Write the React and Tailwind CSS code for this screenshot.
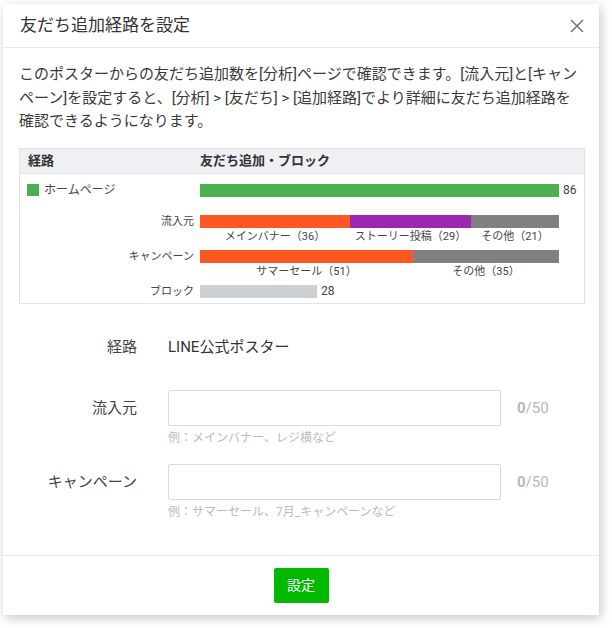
import React from "react";

const font = { fontFamily: 'Roboto, "Noto Sans CJK JP", sans-serif' };
const W = 359;
const w = (n) => Math.round((n / 86) * W);

function Seg({ color, width, label }) {
  return (
    <div className="flex flex-col items-center" style={{ width }}>
      <div className={`h-[13px] w-full ${color}`} />
      <div className="mt-[1px] h-[16px] text-[11px] leading-[16px] text-[#444] whitespace-nowrap">{label}</div>
    </div>
  );
}

export default function App() {
  return (
    <div className="min-h-[628px] bg-white pl-[3px] pt-[4px]" style={font}>
      <div className="w-[596px] bg-white shadow-[2px_3px_10px_rgba(0,0,0,0.22)] text-[#333]">
        {/* header */}
        <div className="flex h-[44px] items-center justify-between border-b border-[#e9eaec] pl-[17px] pr-[14px]">
          <div className="text-[17px] text-[#333]">友だち追加経路を設定</div>
          <svg width="16" height="16" viewBox="0 0 16 16" className="text-[#777]">
            <path d="M2 2 L14 14 M14 2 L2 14" stroke="currentColor" strokeWidth="1.6" />
          </svg>
        </div>

        {/* body */}
        <div className="px-[16px] pt-[15px]">
          <p className="text-[15px] leading-[23.5px] text-[#3a3a3a]">
            このポスターからの友だち追加数を[分析]ページで確認できます。[流入元]と[キャンペーン]を設定すると、[分析] &gt; [友だち] &gt; [追加経路]でより詳細に友だち追加経路を確認できるようになります。
          </p>

          {/* chart */}
          <div className="mt-[14px] w-[566px] border border-[#dfe2e6]">
            <div className="flex h-[25px] items-center border-b border-[#dfe2e6] bg-[#eef0f3] text-[13px] font-bold text-[#333]">
              <div className="w-[180px] pl-[8px]">経路</div>
              <div>友だち追加・ブロック</div>
            </div>
            <div className="pt-[10px] pb-[5px] text-[12px] leading-[13px]">
              <div className="flex h-[13px] items-center">
                <div className="flex w-[180px] items-center pl-[7px]">
                  <div className="h-[12px] w-[12px] bg-[#4caf50]" />
                  <span className="ml-[5px] text-[12px] leading-[13px] text-[#444]">ホームページ</span>
                </div>
                <div className="h-[13px] bg-[#4caf50]" style={{ width: W }} />
                <span className="ml-[4px] text-[12px] leading-[13px] text-[#444]">86</span>
              </div>

              <div className="mt-[18px] flex">
                <div className="w-[180px] pr-[6px] text-right text-[11px] leading-[13px] text-[#444]">流入元</div>
                <div className="flex">
                  <Seg color="bg-[#ff5722]" width={w(36)} label="メインバナー（36）" />
                  <Seg color="bg-[#9c27b0]" width={w(29)} label="ストーリー投稿（29）" />
                  <Seg color="bg-[#808080]" width={W - w(36) - w(29)} label="その他（21）" />
                </div>
              </div>

              <div className="mt-[5px] flex">
                <div className="w-[180px] pr-[6px] text-right text-[11px] leading-[13px] text-[#444]">キャンペーン</div>
                <div className="flex">
                  <Seg color="bg-[#ff5722]" width={w(51)} label="サマーセール（51）" />
                  <Seg color="bg-[#808080]" width={W - w(51)} label="その他（35）" />
                </div>
              </div>

              <div className="mt-[5px] flex h-[13px] items-center">
                <div className="w-[180px] pr-[6px] text-right text-[11px] leading-[13px] text-[#444]">ブロック</div>
                <div className="h-[13px] bg-[#ccd0d5]" style={{ width: w(28) }} />
                <span className="ml-[4px] text-[12px] leading-[13px] text-[#444]">28</span>
              </div>
            </div>
          </div>

          {/* form */}
          <div className="mt-[32px] flex items-center">
            <div className="w-[118px] text-right text-[15px] text-[#444]">経路</div>
            <div className="ml-[31px] text-[15px] text-[#333]">LINE公式ポスター</div>
          </div>

          <div className="mt-[32px] flex">
            <div className="flex h-[36px] w-[118px] items-center justify-end text-[15px] text-[#444]">流入元</div>
            <div className="ml-[31px]">
              <div className="h-[36px] w-[333px] rounded-[2px] border border-[#d7dadf]" />
              <div className="mt-[4px] text-[12px] leading-[17px] text-[#b7bcc2]">例：メインバナー、レジ横など</div>
            </div>
            <div className="ml-[16px] flex h-[36px] items-center text-[15px] text-[#b3b8bf]">
              <span className="font-bold">0</span>/50
            </div>
          </div>

          <div className="mt-[17px] flex">
            <div className="flex h-[36px] w-[118px] items-center justify-end text-[15px] text-[#444]">キャンペーン</div>
            <div className="ml-[31px]">
              <div className="h-[36px] w-[333px] rounded-[2px] border border-[#d7dadf]" />
              <div className="mt-[4px] text-[12px] leading-[17px] text-[#b7bcc2]">例：サマーセール、7月_キャンペーンなど</div>
            </div>
            <div className="ml-[16px] flex h-[36px] items-center text-[15px] text-[#b3b8bf]">
              <span className="font-bold">0</span>/50
            </div>
          </div>
        </div>

        {/* footer */}
        <div className="mt-[34px] flex justify-center border-t border-[#e9eaec] pt-[12px] pb-[12px]">
          <button className="h-[35px] w-[55px] rounded-[2px] bg-[#00b900] text-[14px] text-white">設定</button>
        </div>
      </div>
    </div>
  );
}
